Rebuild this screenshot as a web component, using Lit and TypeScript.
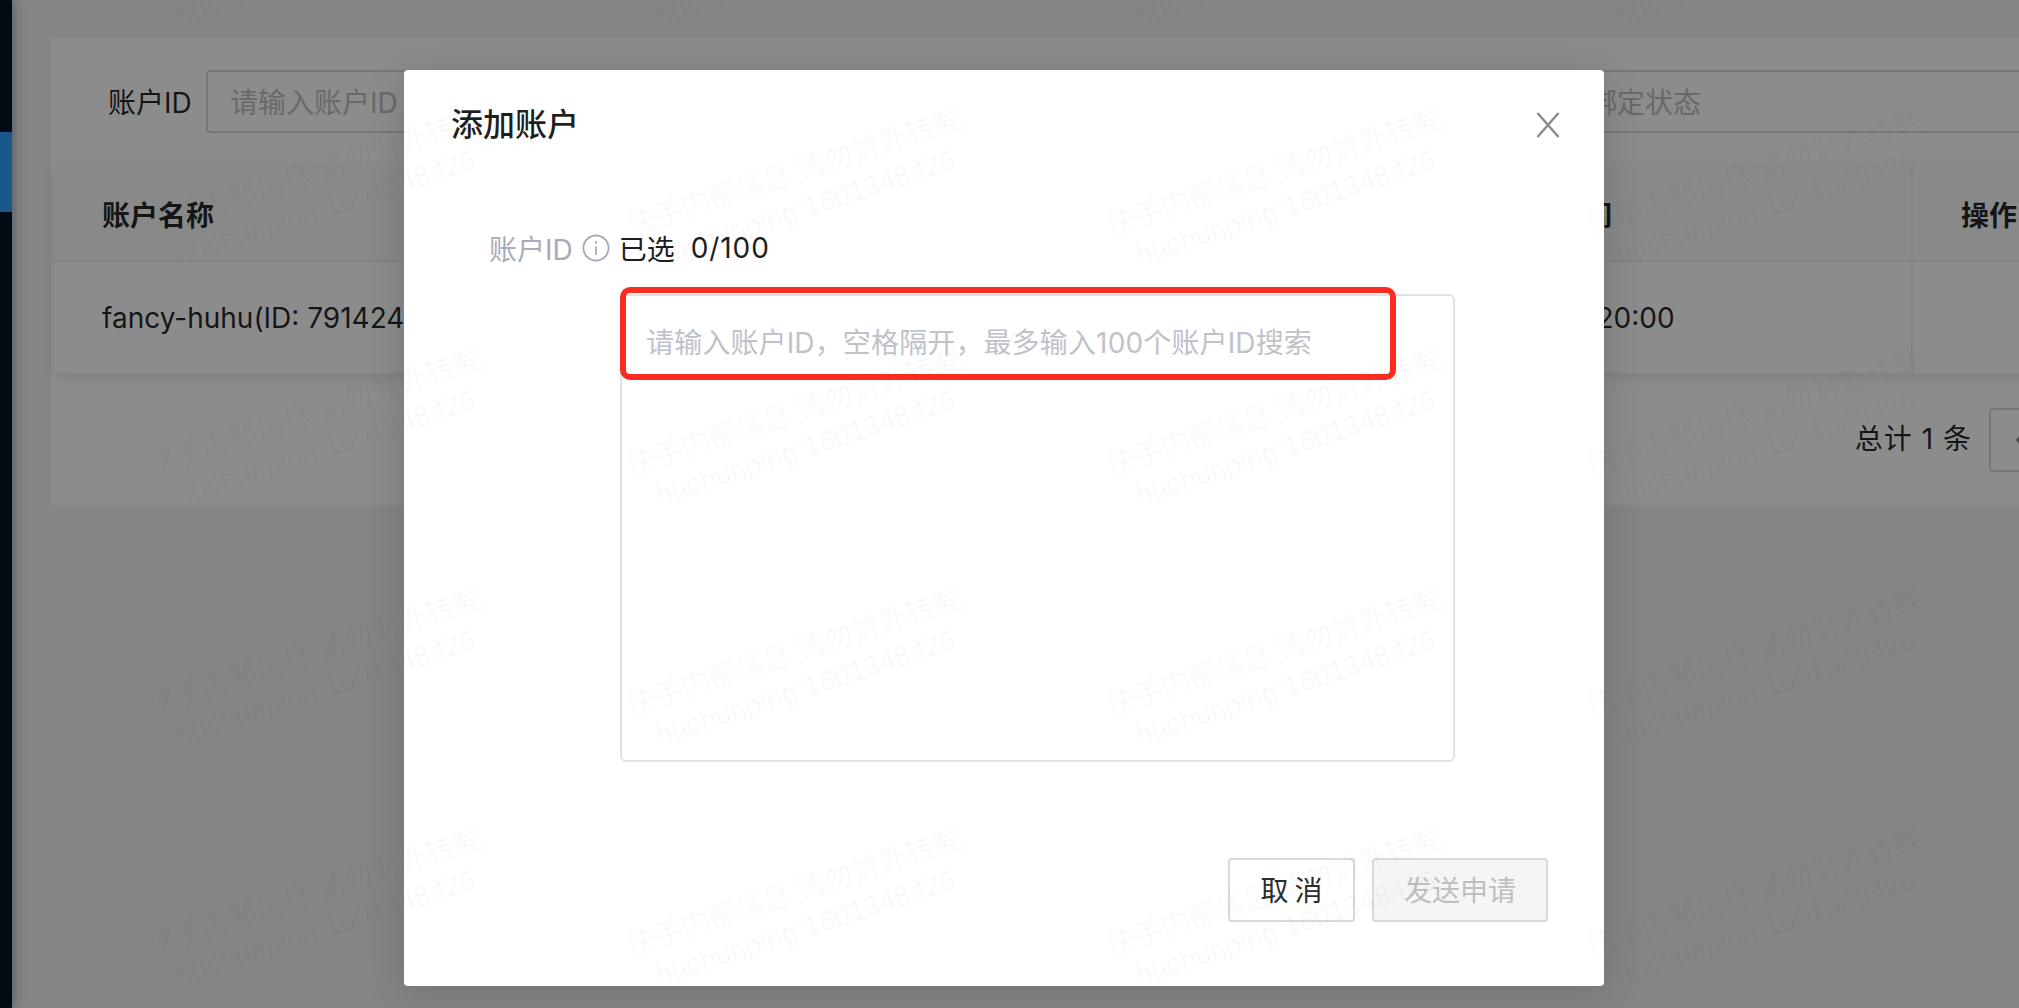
import { LitElement, html, css } from "lit";
import { customElement } from "lit/decorators.js";

const tiles = Array.from({ length: 36 });

@customElement("app-root")
export class AppRoot extends LitElement {
  static styles = css`
    :host {
      display: block;
      position: relative;
      width: 2019px;
      height: 1008px;
      overflow: hidden;
      background: #f0f2f5;
      font-family: Inter, "Noto Sans CJK SC", sans-serif;
      font-size: 28px;
      color: rgba(0, 0, 0, 0.85);
    }
    .page { display: flex; height: 100%; }
    .sidebar {
      flex: none;
      width: 12px;
      background: #001529;
      box-shadow: 2px 0 12px rgba(0, 21, 41, 0.35);
      padding-top: 132px;
      box-sizing: border-box;
    }
    .sidebar .active { height: 80px; background: #2a9fff; }
    .main { flex: none; width: 2088px; padding: 38px 0 0 39px; box-sizing: border-box; }
    .card { background: #fff; padding: 32px 3px 33px; }
    .filters { display: flex; align-items: center; padding: 0 0 35px 54px; height: 63px; box-sizing: content-box; }
    .filters label { width: 98px; flex: none; color: rgba(0, 0, 0, 0.85); margin-top: -2px; }
    .input {
      flex: none;
      box-sizing: border-box;
      width: 500px;
      height: 63px;
      border: 2px solid #d9d9d9;
      border-radius: 4px;
      padding: 0 22px 2px;
      display: flex;
      align-items: center;
      color: #bfbfbf;
    }
    .input.second { margin-left: 775px; width: 800px; }
    .table {
      display: grid;
      grid-template-columns: 1fr 571px 186px;
      box-shadow: 0 4px 14px rgba(0, 0, 0, 0.1);
    }
    .cell { box-sizing: border-box; padding: 0 48px; display: flex; align-items: center; white-space: nowrap; overflow: hidden; }
    .cell.head { height: 94px; background: #fafafa; border-bottom: 2px solid #eee; font-weight: 600; }
    .cell.body { height: 111px; background: #fff; }
    .cell.last { border-left: 2px solid #eee; }
    .pager { display: flex; justify-content: flex-end; align-items: center; gap: 17px; padding: 35px 44px 0 0; }
    .pager .total { letter-spacing: 1px; margin-bottom: 6px; }
    .pager .box {
      width: 64px; height: 64px; box-sizing: border-box;
      border: 2px solid #d9d9d9; border-radius: 4px;
      display: flex; align-items: center; justify-content: center;
    }
    .mask { position: absolute; inset: 0; background: rgba(0, 0, 0, 0.45); }
    .modal {
      box-sizing: border-box;
      width: 1200px;
      height: 916px;
      margin: 70px 0 0 404px;
      background: #fff;
      border-radius: 4px;
      box-shadow: 0 6px 40px rgba(0, 0, 0, 0.16);
      display: flex;
      flex-direction: column;
    }
    .m-head { height: 108px; flex: none; display: flex; align-items: center; justify-content: space-between; padding: 0 44px 0 47px; }
    .m-head .title { font-size: 32px; font-weight: 500; color: rgba(0, 0, 0, 0.88); margin-top: -5px; }
    .m-head svg { display: block; margin-top: 2px; }
    .m-body { flex: 1; padding-top: 50px; }
    .row { display: flex; align-items: center; height: 40px; padding-left: 85px; }
    .row .lab { color: #a9abb6; }
    .row svg { margin: 0 9px 0 9px; flex: none; }
    .row .sel { color: #1e1e22; }
    .row .count { margin-left: 16px; color: #1e1e22; letter-spacing: 0.9px; }
    .field { position: relative; margin: 26px 0 0 216px; width: 835px; height: 468px; }
    textarea {
      display: block;
      width: 100%;
      height: 100%;
      box-sizing: border-box;
      border: 2px solid #e1e2e6;
      border-radius: 6px;
      padding: 27px 24px;
      resize: none;
      outline: none;
      background: transparent;
      font: inherit;
      line-height: 40px;
      letter-spacing: 0.14px;
    }
    textarea::placeholder { color: #c0c2ca; opacity: 1; }
    .mark {
      position: absolute;
      left: 0;
      top: -7px;
      width: 776px;
      height: 93px;
      box-sizing: border-box;
      border: 6px solid #fb2c20;
      border-radius: 10px;
      pointer-events: none;
    }
    .m-foot { flex: none; display: flex; justify-content: flex-end; gap: 17px; padding: 0 56px 64px 0; }
    .btn {
      box-sizing: border-box;
      height: 64px;
      border: 2px solid #d9d9d9;
      border-radius: 4px;
      display: flex;
      align-items: center;
      justify-content: center;
      background: #fff;
      font: inherit;
      color: #2c2c2c;
      padding: 0 0 2px;
    }
    .btn.cancel { width: 127px; letter-spacing: 6px; text-indent: 6px; }
    .btn.send { width: 176px; background: #f5f5f5; color: #bfbfbf; }
    .wm {
      position: absolute;
      left: -400px;
      top: -170px;
      display: grid;
      grid-template-columns: repeat(6, 480px);
      grid-auto-rows: 240px;
      pointer-events: none;
    }
    .tile {
      display: flex;
      flex-direction: column;
      align-items: center;
      justify-content: center;
      transform: rotate(-18deg);
      color: rgba(0, 0, 0, 0.03);
      font-family: "Liberation Sans", "Noto Sans CJK SC", sans-serif;
      font-size: 28.5px;
      line-height: 37px;
      white-space: nowrap;
    }
  `;

  render() {
    return html`
      <div class="page">
        <aside class="sidebar"><div class="active"></div></aside>
        <main class="main">
          <section class="card">
            <div class="filters">
              <label>账户ID</label>
              <div class="input">请输入账户ID</div>
              <div class="input second">请选择绑定状态</div>
            </div>
            <div class="table">
              <div class="cell head">账户名称</div>
              <div class="cell head">账户绑定申请时间</div>
              <div class="cell head last">操作</div>
              <div class="cell body">fancy-huhu(ID: 79142401)</div>
              <div class="cell body">2022-06-20 10:20:00</div>
              <div class="cell body last"></div>
            </div>
            <div class="pager">
              <span class="total">总计 1 条</span>
              <span class="box">
                <svg width="14" height="22" viewBox="0 0 14 22"><path d="M11 3 3 11l8 8" fill="none" stroke="#8c8c8c" stroke-width="2"/></svg>
              </span>
            </div>
          </section>
        </main>
      </div>
      <div class="mask">
        <div class="modal">
          <div class="m-head">
            <span class="title">添加账户</span>
            <svg width="24" height="26" viewBox="0 0 24 26"><path d="M1.5 1 22.5 25M22.5 1 1.5 25" fill="none" stroke="#8a8a8a" stroke-width="2.4"/></svg>
          </div>
          <div class="m-body">
            <div class="row">
              <span class="lab">账户ID</span>
              <svg width="28" height="28" viewBox="0 0 28 28">
                <circle cx="14" cy="14" r="12.6" fill="none" stroke="#a9abb6" stroke-width="2"/>
                <path d="M14 12.5V21" stroke="#a9abb6" stroke-width="1.8"/>
                <circle cx="14" cy="8.5" r="1.3" fill="#a9abb6"/>
              </svg>
              <span class="sel">已选</span>
              <span class="count">0/100</span>
            </div>
            <div class="field">
              <textarea placeholder="请输入账户ID，空格隔开，最多输入100个账户ID搜索"></textarea>
              <div class="mark"></div>
            </div>
          </div>
          <div class="m-foot">
            <button class="btn cancel">取消</button>
            <button class="btn send">发送申请</button>
          </div>
        </div>
      </div>
      <div class="wm">
        ${tiles.map(
          () => html`<div class="tile"><span>快手内部信息 请勿对外转载</span><span>huchunping 1601348425</span></div>`
        )}
      </div>
    `;
  }
}
